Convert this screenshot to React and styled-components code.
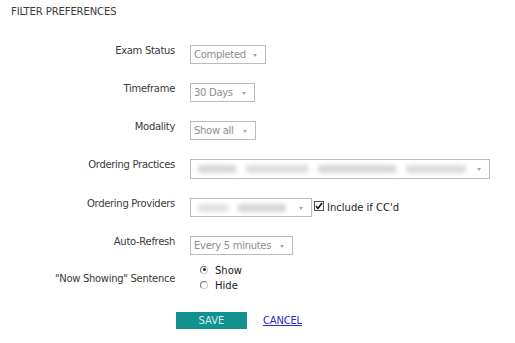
import React from "react";
import styled, { createGlobalStyle } from "styled-components";

const GlobalStyle = createGlobalStyle`
  body {
    margin: 0;
    background: #fff;
    font-family: "DejaVu Sans", Verdana, sans-serif;
    font-size: 10px;
    color: #333;
  }
`;

const Page = styled.div`
  padding: 6px 0 0 11px;
`;

const Title = styled.div`
  line-height: 12px;
  text-transform: uppercase;
  letter-spacing: -0.1px;
  color: #3a3a3a;
`;

const Form = styled.div`
  display: flex;
  flex-direction: column;
  margin-top: 27px;
`;

const Row = styled.div`
  display: grid;
  grid-template-columns: 164px auto;
  column-gap: 15px;
  align-items: ${(p) => (p.$center ? "center" : "start")};
  margin-top: ${(p) => p.$gap ?? 19}px;
  &:first-child {
    margin-top: 0;
  }
`;

const Label = styled.div`
  text-align: right;
  line-height: 11px;
  letter-spacing: -0.3px;
  color: #3a3a3a;
  white-space: nowrap;
`;

const Field = styled.div`
  display: flex;
  align-items: center;
`;

const SelectBox = styled.div`
  position: relative;
  box-sizing: border-box;
  width: ${(p) => p.$width}px;
  height: ${(p) => p.$height ?? 19}px;
  border: 1px solid #bbbbbb;
  background: #fff;
  color: #8e8e8e;
  letter-spacing: -0.3px;
  padding-left: 3px;
  display: flex;
  align-items: center;
  white-space: nowrap;
  overflow: hidden;
`;

const Arrow = styled.span`
  position: absolute;
  right: 8px;
  top: 50%;
  margin-top: -1px;
  width: 0;
  height: 0;
  border-left: 2.5px solid transparent;
  border-right: 2.5px solid transparent;
  border-top: 3px solid #a5a5a5;
`;

const Blur = styled.div`
  display: flex;
  gap: 10px;
  align-items: center;
  filter: blur(2px);
  padding-left: 4px;
`;

const Smudge = styled.span`
  display: inline-block;
  width: ${(p) => p.$w}px;
  height: 8px;
  background: ${(p) => p.$c ?? "#d6d6d6"};
  border-radius: 2px;
`;

const Check = styled.span`
  box-sizing: border-box;
  width: 10px;
  height: 10px;
  margin: -3px 3px 0 2px;
  border: 1px solid #555;
  background: #fff;
  display: inline-flex;
  align-items: center;
  justify-content: center;
`;

const CheckText = styled.span`
  color: #222;
`;

const Radios = styled.div`
  display: flex;
  flex-direction: column;
  padding-left: 10px;
`;

const RadioLine = styled.label`
  display: flex;
  align-items: center;
  line-height: 15px;
  color: #222;
`;

const Radio = styled.span`
  box-sizing: border-box;
  width: 8px;
  height: 8px;
  margin: -2px 7px 0 0;
  border-radius: 50%;
  border: 1px solid #777;
  border-right-color: #ccc;
  border-bottom-color: #ccc;
  display: inline-flex;
  align-items: center;
  justify-content: center;
  &::after {
    content: "";
    width: 3px;
    height: 3px;
    border-radius: 50%;
    background: ${(p) => (p.$on ? "#222" : "transparent")};
  }
`;

const Actions = styled.div`
  display: flex;
  align-items: center;
  gap: 16px;
  margin-top: 19px;
  padding-left: 165px;
`;

const SaveButton = styled.button`
  width: 71px;
  height: 17px;
  border: none;
  background: #12918f;
  color: #d5ecec;
  font-family: "DejaVu Sans", Verdana, sans-serif;
  font-size: 10px;
  padding: 0;
  cursor: pointer;
`;

const CancelLink = styled.a`
  color: #2a2ac8;
  text-decoration: underline;
  font-size: 10px;
  letter-spacing: -0.2px;
  cursor: pointer;
`;

const Select = ({ width, height, children }) => (
  <SelectBox $width={width} $height={height}>
    {children}
    <Arrow />
  </SelectBox>
);

export default function App() {
  return (
    <>
      <GlobalStyle />
      <Page>
        <Title>Filter Preferences</Title>
        <Form>
          <Row>
            <Label>Exam Status</Label>
            <Field>
              <Select width={76}>Completed</Select>
            </Field>
          </Row>
          <Row>
            <Label>Timeframe</Label>
            <Field>
              <Select width={65}>30 Days</Select>
            </Field>
          </Row>
          <Row>
            <Label>Modality</Label>
            <Field>
              <Select width={66}>Show all</Select>
            </Field>
          </Row>
          <Row>
            <Label>Ordering Practices</Label>
            <Field>
              <Select width={300} height={20}>
                <Blur>
                  <Smudge $w={38} />
                  <Smudge $w={62} $c="#dedede" />
                  <Smudge $w={78} />
                  <Smudge $w={60} $c="#dcdcdc" />
                </Blur>
              </Select>
            </Field>
          </Row>
          <Row>
            <Label>Ordering Providers</Label>
            <Field>
              <Select width={122}>
                <Blur>
                  <Smudge $w={30} $c="#e0e0e0" />
                  <Smudge $w={48} />
                </Blur>
              </Select>
              <Check>
                <svg width="8" height="8" viewBox="0 0 8 8">
                  <path d="M1 4 L3 6.5 L7 1" fill="none" stroke="#111" strokeWidth="1.6" />
                </svg>
              </Check>
              <CheckText>Include if CC'd</CheckText>
            </Field>
          </Row>
          <Row>
            <Label>Auto-Refresh</Label>
            <Field>
              <Select width={103}>Every 5 minutes</Select>
            </Field>
          </Row>
          <Row $center $gap={8}>
            <Label $center>"Now Showing" Sentence</Label>
            <Radios>
              <RadioLine>
                <Radio $on />
                Show
              </RadioLine>
              <RadioLine>
                <Radio />
                Hide
              </RadioLine>
            </Radios>
          </Row>
        </Form>
        <Actions>
          <SaveButton>SAVE</SaveButton>
          <CancelLink>CANCEL</CancelLink>
        </Actions>
      </Page>
    </>
  );
}
